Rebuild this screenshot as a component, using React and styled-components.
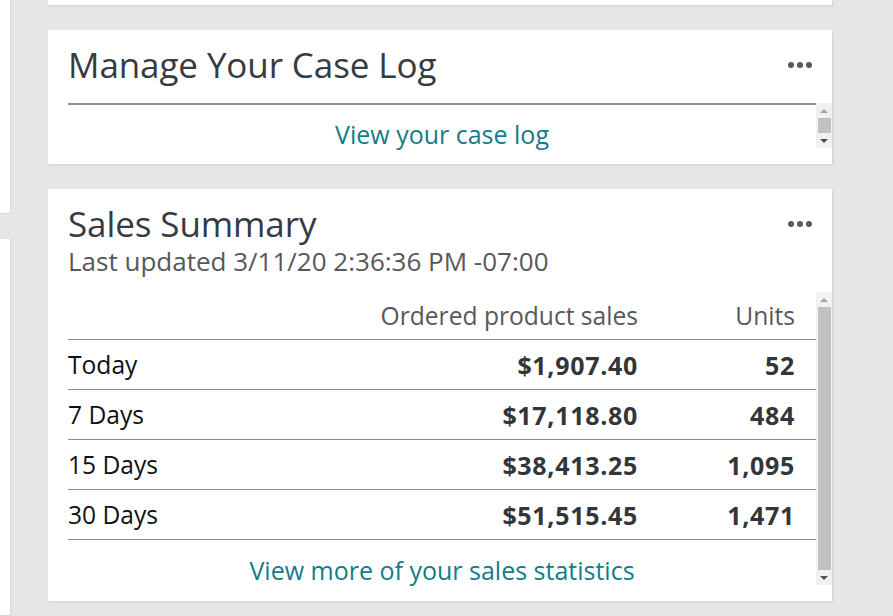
import React from "react";
import styled, { createGlobalStyle } from "styled-components";

const Global = createGlobalStyle`
  html, body { margin: 0; padding: 0; }
  body {
    background: #e6e6e6;
    font-family: "Open Sans", "Liberation Sans", sans-serif;
    overflow: hidden;
  }
`;

const Page = styled.div`
  display: flex;
  height: 616px;
  overflow: hidden;
`;

const Rail = styled.div`
  width: 11px;
  display: flex;
  flex-direction: column;
  gap: 25px;
`;

const RailBlock = styled.div`
  background: #fff;
  border-right: 1px solid #d9d9d9;
  border-bottom: 1px solid #d9d9d9;
  height: ${(p) => p.$h}px;
  flex: ${(p) => (p.$grow ? 1 : "none")};
`;

const Main = styled.div`
  margin-left: 37px;
  width: 784px;
  display: flex;
  flex-direction: column;
  gap: 25px;
`;

const Card = styled.section`
  background: #fff;
  box-shadow: 1px 1px 2px rgba(0, 0, 0, 0.1);
  padding: 14px 0 16px 20px;
  display: flex;
  flex-direction: column;
`;

const Stub = styled.div`
  background: #fff;
  height: 5px;
  box-shadow: 1px 1px 2px rgba(0, 0, 0, 0.1);
`;

const Header = styled.header`
  display: flex;
  align-items: flex-start;
  justify-content: space-between;
  padding-right: 20px;
`;

const TitleBlock = styled.div`
  display: flex;
  flex-direction: column;
`;

const Title = styled.h2`
  margin: 0;
  font-size: 35px;
  line-height: 42px;
  font-weight: 400;
  color: #353b42;
  letter-spacing: -0.1px;
`;

const Sub = styled.div`
  font-size: 26px;
  line-height: 32px;
  color: #565959;
`;

const Dots = styled.div`
  display: flex;
  gap: 3px;
  height: 42px;
  align-items: center;
`;

const Dot = styled.span`
  width: 6px;
  height: 6px;
  border-radius: 50%;
  background: #555a5e;
`;

const ScrollArea = styled.div`
  display: flex;
  height: ${(p) => p.$h}px;
  margin-top: ${(p) => p.$mt}px;
`;

const ScrollContent = styled.div`
  flex: 1;
  border-top: ${(p) => (p.$rule ? "2px solid #879596" : "none")};
`;

const Track = styled.div`
  width: 16px;
  background: #f1f1f1;
  display: flex;
  flex-direction: column;
`;

const ArrowBox = styled.div`
  height: 15px;
  display: flex;
  align-items: center;
  justify-content: center;
  flex: none;
`;

const Tri = styled.span`
  width: 0;
  height: 0;
  border-left: 4px solid transparent;
  border-right: 4px solid transparent;
  ${(p) =>
    p.$up
      ? "border-bottom: 4px solid #a3a3a3;"
      : "border-top: 4px solid #505050;"}
`;

const Thumb = styled.div`
  flex: 1;
  background: #c1c1c1;
  margin: 0 1px 0 2px;
`;

const Scrollbar = () => (
  <Track>
    <ArrowBox>
      <Tri $up />
    </ArrowBox>
    <Thumb />
    <ArrowBox>
      <Tri />
    </ArrowBox>
  </Track>
);

const LinkRow = styled.div`
  text-align: center;
  padding-top: ${(p) => p.$pt}px;
  line-height: 26px;
`;

const Link = styled.a`
  font-size: 25px;
  color: #127c8a;
  text-decoration: none;
`;

const Table = styled.table`
  width: 100%;
  border-collapse: collapse;
  font-size: 24.6px;
`;

const Th = styled.th`
  font-weight: 400;
  color: #565959;
  text-align: ${(p) => p.$align || "left"};
  height: 47px;
  vertical-align: middle;
  padding: 0 ${(p) => p.$pr || 0}px 0 0;
  border-bottom: 1px solid #8c8c8c;
  width: ${(p) => (p.$w ? p.$w + "px" : "auto")};
`;

const Td = styled.td`
  height: 49px;
  vertical-align: middle;
  border-bottom: 1px solid #8c8c8c;
  padding: 0 ${(p) => p.$pr || 0}px 0 0;
  text-align: ${(p) => (p.$num ? "right" : "left")};
  font-weight: ${(p) => (p.$num ? 700 : 400)};
  font-size: ${(p) => (p.$num ? "25px" : "inherit")};
  letter-spacing: ${(p) => (p.$num ? "0.7px" : "0")};
  color: ${(p) => (p.$num ? "#333638" : "#0f1111")};
`;

const rows = [
  ["Today", "$1,907.40", "52"],
  ["7 Days", "$17,118.80", "484"],
  ["15 Days", "$38,413.25", "1,095"],
  ["30 Days", "$51,515.45", "1,471"],
];

export default function App() {
  return (
    <>
      <Global />
      <Page>
        <Rail>
          <RailBlock $h={213} />
          <RailBlock $grow />
        </Rail>
        <Main>
          <Stub />
          <Card>
            <Header>
              <Title>Manage Your Case Log</Title>
              <Dots>
                <Dot />
                <Dot />
                <Dot />
              </Dots>
            </Header>
            <ScrollArea $h={45} $mt={17}>
              <ScrollContent $rule>
                <LinkRow $pt={16}>
                  <Link href="#">View your case log</Link>
                </LinkRow>
              </ScrollContent>
              <Scrollbar />
            </ScrollArea>
          </Card>
          <Card>
            <Header>
              <TitleBlock>
                <Title>Sales Summary</Title>
                <Sub>Last updated 3/11/20 2:36:36 PM -07:00</Sub>
              </TitleBlock>
              <Dots>
                <Dot />
                <Dot />
                <Dot />
              </Dots>
            </Header>
            <ScrollArea $h={293} $mt={15}>
              <ScrollContent>
                <Table>
                  <thead>
                    <tr>
                      <Th />
                      <Th $align="right">Ordered product sales</Th>
                      <Th $align="right" $w={157} $pr={21}>
                        Units
                      </Th>
                    </tr>
                  </thead>
                  <tbody>
                    {rows.map(([label, sales, units]) => (
                      <tr key={label}>
                        <Td>{label}</Td>
                        <Td $num>{sales}</Td>
                        <Td $num $pr={21}>
                          {units}
                        </Td>
                      </tr>
                    ))}
                  </tbody>
                </Table>
                <LinkRow $pt={17}>
                  <Link href="#">View more of your sales statistics</Link>
                </LinkRow>
              </ScrollContent>
              <Scrollbar />
            </ScrollArea>
          </Card>
        </Main>
      </Page>
    </>
  );
}
